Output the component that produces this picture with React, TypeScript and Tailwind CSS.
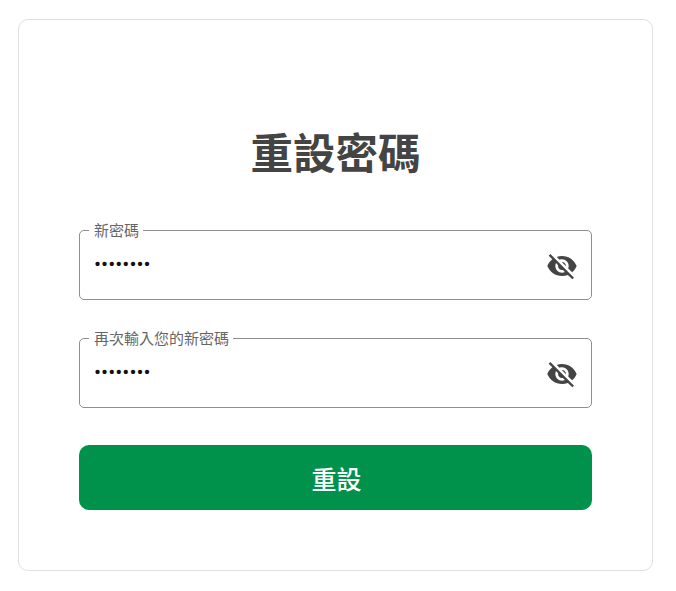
import * as React from 'react';

const fontStack = '[font-family:Roboto,"Noto_Sans_CJK_TC",sans-serif]';

function PasswordField({ label }: { label: string }) {
  return (
    <fieldset className="h-[78px] rounded-[5px] border border-[#8f8f8f] pl-[14px] pr-[13px]">
      <legend className="ml-[-5px] h-[16px] pl-[5px] pr-[4px] text-[15px] leading-[18px] text-[#666666]">{label}</legend>
      <div className="flex h-[61px] items-center">
        <input
          type="password"
          readOnly
          defaultValue="password"
          className="mt-[-7px] min-w-0 flex-1 bg-transparent text-[21px] text-[#111111] outline-none"
        />
        <button type="button" className="mt-[-5px] flex">
          <svg width="32" height="32" viewBox="0 0 24 24" fill="#444444">
            <path d="M12 7c2.76 0 5 2.24 5 5 0 .65-.13 1.26-.36 1.83l2.92 2.92c1.51-1.26 2.7-2.89 3.43-4.75-1.73-4.39-6-7.5-11-7.5-1.4 0-2.74.25-3.98.7l2.16 2.16C10.74 7.13 11.35 7 12 7zM2 4.27l2.28 2.28.46.46C3.08 8.3 1.78 10.02 1 12c1.73 4.39 6 7.5 11 7.5 1.55 0 3.03-.3 4.38-.84l.42.42L19.73 22 21 20.73 3.27 3 2 4.27zM7.53 9.8l1.55 1.55c-.05.21-.08.43-.08.65 0 1.66 1.34 3 3 3 .22 0 .44-.03.65-.08l1.55 1.55c-.67.33-1.41.53-2.2.53-2.76 0-5-2.24-5-5 0-.79.2-1.53.53-2.2zm4.31-.78l3.15 3.15.02-.16c0-1.66-1.34-3-3-3l-.17.01z" />
          </svg>
        </button>
      </div>
    </fieldset>
  );
}

export default function App() {
  return (
    <div className={`min-h-[591px] bg-white pl-[18px] pr-[23px] pt-[19px] ${fontStack}`}>
      <div className="flex h-[552px] flex-col rounded-[10px] border border-[#e0e0e0] px-[60px] pt-[107px]">
        <h1 className="text-center text-[42.5px] font-bold leading-[56px] text-[#444444]">重設密碼</h1>
        <form className="mt-[39px] flex flex-col">
          <PasswordField label="新密碼" />
          <div className="mt-[30px]">
            <PasswordField label="再次輸入您的新密碼" />
          </div>
          <button type="button" className="mt-[37px] h-[65px] rounded-[10px] bg-[#00924a] pl-[2px] pt-[7px] text-[25px] font-medium text-white">
            重設
          </button>
        </form>
      </div>
    </div>
  );
}
